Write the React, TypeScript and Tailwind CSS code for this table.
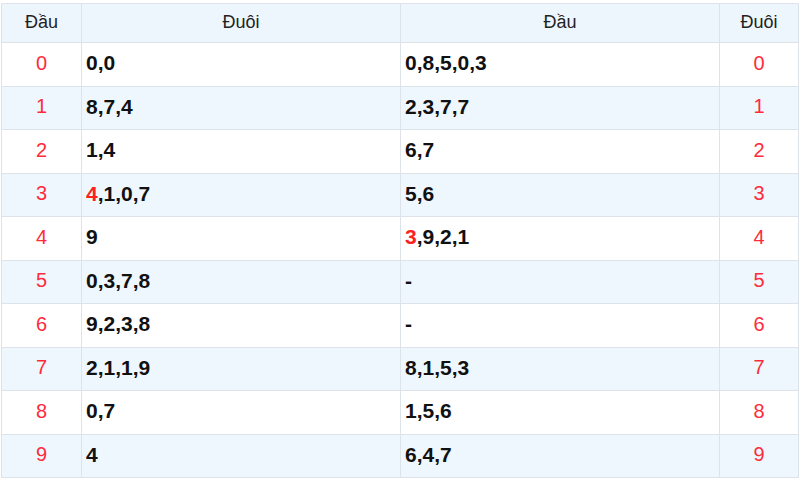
const rows: { d: number; tail: string; head: string; hlTail?: boolean; hlHead?: boolean }[] = [
  { d: 0, tail: "0,0", head: "0,8,5,0,3" },
  { d: 1, tail: "8,7,4", head: "2,3,7,7" },
  { d: 2, tail: "1,4", head: "6,7" },
  { d: 3, tail: "4,1,0,7", head: "5,6", hlTail: true },
  { d: 4, tail: "9", head: "3,9,2,1", hlHead: true },
  { d: 5, tail: "0,3,7,8", head: "-" },
  { d: 6, tail: "9,2,3,8", head: "-" },
  { d: 7, tail: "2,1,1,9", head: "8,1,5,3" },
  { d: 8, tail: "0,7", head: "1,5,6" },
  { d: 9, tail: "4", head: "6,4,7" },
];

const Nums = ({ text, hl }: { text: string; hl?: boolean }) => {
  if (!hl) return <>{text}</>;
  const [first, ...rest] = text.split(",");
  return (
    <>
      <span className="text-[#ff2020]">{first}</span>
      {"," + rest.join(",")}
    </>
  );
};

export default function App() {
  return (
    <div className="w-[800px] h-[480px] bg-white pt-[3px] pl-[1px] font-['Liberation_Sans',Arial,sans-serif]">
      <table className="table-fixed border-collapse w-[797px] text-[#111]">
        <colgroup>
          <col className="w-[80px]" />
          <col className="w-[319px]" />
          <col className="w-[319px]" />
          <col className="w-[79px]" />
        </colgroup>
        <thead>
          <tr className="h-[39px] bg-[#eef6fd] text-[18px] text-[#222]">
            <th className="border border-[#dde3e8] font-normal text-center pb-[2px]">Đầu</th>
            <th className="border border-[#dde3e8] font-normal text-center pb-[2px]">Đuôi</th>
            <th className="border border-[#dde3e8] font-normal text-center pb-[2px]">Đầu</th>
            <th className="border border-[#dde3e8] font-normal text-center pb-[2px]">Đuôi</th>
          </tr>
        </thead>
        <tbody>
          {rows.map((r) => (
            <tr key={r.d} className={r.d % 2 === 1 ? "h-[43.5px] bg-[#eff7fe]" : "h-[43.5px] bg-white"}>
              <td className="border border-[#dde3e8] text-center text-[20px] text-[#ff2b3a] pb-[3px]">{r.d}</td>
              <td className="border border-[#dde3e8] pl-[4px] text-[21px] font-bold pb-[3px]">
                <Nums text={r.tail} hl={r.hlTail} />
              </td>
              <td className="border border-[#dde3e8] pl-[4px] text-[21px] font-bold pb-[3px]">
                <Nums text={r.head} hl={r.hlHead} />
              </td>
              <td className="border border-[#dde3e8] text-center text-[20px] text-[#ff2b3a] pb-[3px]">{r.d}</td>
            </tr>
          ))}
        </tbody>
      </table>
    </div>
  );
}
